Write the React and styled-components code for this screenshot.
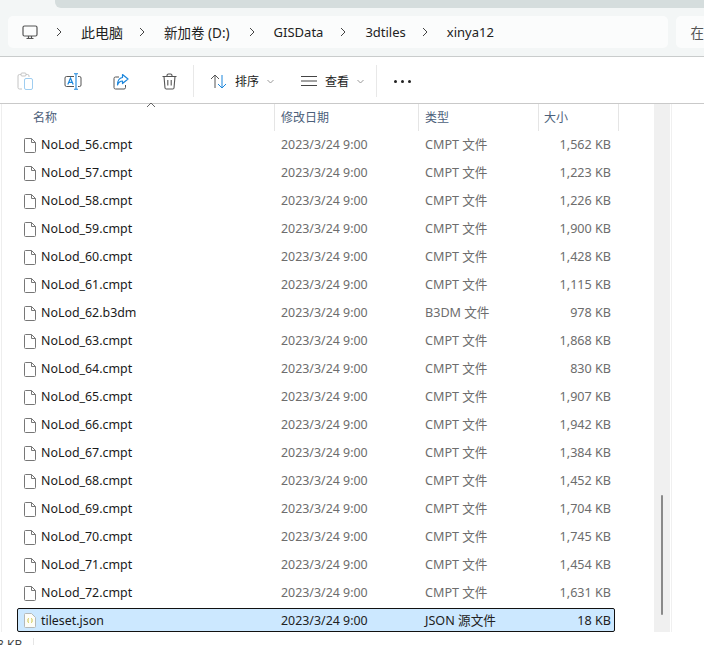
import React from 'react'
import styled, { createGlobalStyle } from 'styled-components'

const GlobalStyle = createGlobalStyle`
  html, body {
    margin: 0;
    padding: 0;
    background: #fff;
    overflow: hidden;
  }
  body {
    font-family: "Noto Sans", "Noto Sans CJK SC", sans-serif;
  }
`

const crumbs = [
  { label: '此电脑', size: 14, gap: 16 },
  { label: '新加卷 (D:)', size: 13.5, gap: 19 },
  { label: 'GISData', size: 13, gap: 17 },
  { label: '3dtiles', size: 13, gap: 16 },
  { label: 'xinya12', size: 13, gap: 16 },
]

const sizes = [
  1562, 1223, 1226, 1900, 1428, 1115, 978, 1868, 830, 1907, 1942, 1384, 1452, 1704, 1745, 1454, 1631,
]

const formatSize = (n) => `${n.toLocaleString('en-US')} KB`

const files = sizes.map((size, i) => {
  const num = 56 + i
  const isB3dm = num === 62
  return {
    name: `NoLod_${num}.${isB3dm ? 'b3dm' : 'cmpt'}`,
    type: isB3dm ? 'B3DM 文件' : 'CMPT 文件',
    size: formatSize(size),
  }
})

function Chevron() {
  return (
    <svg width="6" height="10" viewBox="0 0 6 10" fill="none" stroke="#444" strokeWidth="1">
      <path d="M1 1l4 4-4 4" />
    </svg>
  )
}

function Monitor() {
  return (
    <svg width="16" height="15" viewBox="0 0 16 15" fill="none" stroke="#555" strokeWidth="1.2">
      <rect x="1" y="1" width="14" height="10" rx="1.5" />
      <path d="M4.500 13.500h7M6.500 11v2.500M9.500 11v2.500" />
    </svg>
  )
}

function Caret() {
  return (
    <svg width="7" height="5" viewBox="0 0 7 5" fill="none" stroke="#999" strokeWidth="1">
      <path d="M.5 1l3 3 3-3" />
    </svg>
  )
}

function PasteIcon() {
  return (
    <svg width="16" height="18" viewBox="0 0 16 18" fill="none">
      <path d="M5 17H2.500A1.500 1.500 0 0 1 1 15.500V4a1.500 1.500 0 0 1 1.500-1.500h8A1.500 1.500 0 0 1 12 4v1" stroke="#c4c4c4" />
      <rect x="4" y="1" width="5" height="3" rx="1" stroke="#c4c4c4" fill="#fff" />
      <rect x="7.500" y="6.500" width="8" height="11" rx="1.500" stroke="#9fcdf0" fill="#fff" />
    </svg>
  )
}

function RenameIcon() {
  return (
    <svg width="18" height="17" viewBox="0 0 18 17" fill="none">
      <path d="M10 3.500H2.500A1.500 1.500 0 0 0 1 5v7a1.500 1.500 0 0 0 1.500 1.500H10M14 3.500h1.500A1.500 1.500 0 0 1 17 5v7a1.500 1.500 0 0 1-1.500 1.500H14" stroke="#555" />
      <path d="M10 .8h4M12 .8v15.400M10 16.200h4" stroke="#1b86dc" strokeWidth="1.1" />
      <path d="M3.800 11.500L6.500 5l2.700 6.500M4.800 9.400h3.400" stroke="#1b86dc" strokeWidth="1.2" />
    </svg>
  )
}

function ShareIcon() {
  return (
    <svg width="16" height="17" viewBox="0 0 16 17" fill="none">
      <path d="M6 4H2.500A1.500 1.500 0 0 0 1 5.500v9A1.500 1.500 0 0 0 2.500 16h8.500a1.500 1.500 0 0 0 1.500-1.500V12" stroke="#555" />
      <path d="M9.500 1.500L15 6l-5.500 4.500V8C7 8 5.500 9.500 4.500 12c0-4 1.500-7 5-7.500z" stroke="#1b86dc" strokeWidth="1.2" strokeLinejoin="round" />
    </svg>
  )
}

function TrashIcon() {
  return (
    <svg width="15" height="17" viewBox="0 0 15 17" fill="none" stroke="#555" strokeWidth="1.1">
      <path d="M.5 3.500h14M5 3.500V2.500A1.500 1.500 0 0 1 6.500 1h2A1.500 1.500 0 0 1 10 2.500v1" />
      <path d="M2 3.500l1 11.500a1.200 1.200 0 0 0 1.200 1h6.600a1.200 1.200 0 0 0 1.200-1l1-11.500" />
      <path d="M5.800 7v5.500M9.200 7v5.500" />
    </svg>
  )
}

function SortIcon() {
  return (
    <svg width="17" height="15" viewBox="0 0 17 15" fill="none">
      <path d="M5 14V1M1 5l4-4 4 4" stroke="#555" />
      <path d="M12 1v13M8 10l4 4 4-4" stroke="#1b86dc" />
    </svg>
  )
}

function ViewIcon() {
  return (
    <svg width="16" height="10" viewBox="0 0 16 10" fill="none" stroke="#444" strokeWidth="1">
      <path d="M0 .5h16M0 5h16M0 9.500h16" />
    </svg>
  )
}

function FileIcon() {
  return (
    <svg width="12" height="15" viewBox="0 0 12 15" fill="#fff" stroke="#777" strokeWidth="1">
      <path d="M1.500.5h6l4 4v9a1 1 0 0 1-1 1h-9a1 1 0 0 1-1-1v-12a1 1 0 0 1 1-1z" />
      <path d="M7.500.5v4h4" fill="none" />
    </svg>
  )
}

function JsonIcon() {
  return (
    <svg width="12" height="15" viewBox="0 0 12 15" fill="#fdfdf8" stroke="#b5b9b9" strokeWidth="1">
      <path d="M1.500.5h6l4 4v9a1 1 0 0 1-1 1h-9a1 1 0 0 1-1-1v-12a1 1 0 0 1 1-1z" />
      <path d="M4.800 5.500c-1 0-.8 1-.8 2s-.2 2 .8 2M7.200 5.500c1 0 .8 1 .8 2s.2 2-.8 2" fill="none" stroke="#c9c030" />
    </svg>
  )
}

function App() {
  return (
    <Page>
      <GlobalStyle />
      <TopBand>
        <TitleStrip />
        <AddressRow>
          <AddressBar>
            <MonitorSlot>
              <Monitor />
            </MonitorSlot>
            {crumbs.map((c) => (
              <Crumb key={c.label} $gap={c.gap}>
                <Chevron />
                <CrumbText $size={c.size}>{c.label}</CrumbText>
              </Crumb>
            ))}
          </AddressBar>
          <SearchBox>在</SearchBox>
        </AddressRow>
      </TopBand>

      <Toolbar>
        <IconButton><PasteIcon /></IconButton>
        <IconButton><RenameIcon /></IconButton>
        <IconButton><ShareIcon /></IconButton>
        <IconButton><TrashIcon /></IconButton>
        <ToolDivider />
        <MenuButton>
          <SortIcon />
          <MenuLabel>排序</MenuLabel>
          <Caret />
        </MenuButton>
        <MenuButton>
          <ViewIcon />
          <MenuLabel>查看</MenuLabel>
          <Caret />
        </MenuButton>
        <ToolDivider />
        <Dots>
          <Dot />
          <Dot />
          <Dot />
        </Dots>
      </Toolbar>

      <Body>
        <ListPane>
          <Header>
            <SortArrow>
              <svg width="10" height="6" viewBox="0 0 10 6" fill="none" stroke="#666" strokeWidth="1">
                <path d="M1 5l4-4 4 4" />
              </svg>
            </SortArrow>
            <HeaderCell $width={273} $pad={31}>名称</HeaderCell>
            <HeaderCell $width={144} $pad={6}>修改日期</HeaderCell>
            <HeaderCell $width={120} $pad={6}>类型</HeaderCell>
            <HeaderCell $width={80} $pad={5}>大小</HeaderCell>
          </Header>
          {files.map((f) => (
            <Row key={f.name}>
              <NameCell>
                <FileIcon />
                <FileName>{f.name}</FileName>
              </NameCell>
              <DateCell>2023/3/24 9:00</DateCell>
              <TypeCell>{f.type}</TypeCell>
              <SizeCell>{f.size}</SizeCell>
            </Row>
          ))}
          <SelectedRow>
            <NameCell $selected>
              <JsonIcon />
              <FileName>tileset.json</FileName>
            </NameCell>
            <DateCell $selected>2023/3/24 9:00</DateCell>
            <TypeCell $selected>JSON 源文件</TypeCell>
            <SizeCell $selected>18 KB</SizeCell>
          </SelectedRow>
        </ListPane>
        <ScrollTrack>
          <ScrollThumb />
        </ScrollTrack>
      </Body>

      <Footer>
        <FooterText>8 KB</FooterText>
        <FooterLine />
      </Footer>
    </Page>
  )
}

const Page = styled.div`
  width: 704px;
  height: 645px;
  display: flex;
  flex-direction: column;
  overflow: hidden;
  font-size: 12.4px;
  color: #1a1a1a;
  background: #fff;
`

const TopBand = styled.div`
  height: 56px;
  background: #f3f6f6;
  border-bottom: 1px solid #c9cccc;
`

const TitleStrip = styled.div`
  height: 8px;
  margin-left: 55px;
  background: #d5dddd;
  border-bottom-left-radius: 6px;
`

const AddressRow = styled.div`
  display: flex;
  gap: 8px;
  height: 32px;
  margin: 8px 0 0 8px;
`

const AddressBar = styled.div`
  width: 655px;
  display: flex;
  align-items: center;
  background: #fbfcfc;
  border-radius: 5px;
  padding-left: 14px;
`

const MonitorSlot = styled.div`
  display: flex;
  width: 34px;
`

const Crumb = styled.div`
  display: flex;
  align-items: center;
  gap: 19px;
  margin-right: ${(p) => p.$gap}px;
`

const CrumbText = styled.span`
  font-size: ${(p) => p.$size}px;
  color: #222;
`

const SearchBox = styled.div`
  flex: 1;
  display: flex;
  align-items: center;
  padding-left: 15px;
  background: #fbfcfc;
  border-radius: 5px 0 0 5px;
  font-size: 13.500px;
  color: #555;
`

const Toolbar = styled.div`
  height: 44px;
  padding: 2px 0 0 1px;
  display: flex;
  align-items: center;
  border-bottom: 1px solid #c9c9c9;
`

const IconButton = styled.div`
  width: 48px;
  display: flex;
  justify-content: center;
`

const ToolDivider = styled.div`
  width: 1px;
  height: 32px;
  background: #e8e8e8;
`

const MenuButton = styled.div`
  width: 91px;
  display: flex;
  align-items: center;
  padding-left: 16px;
  box-sizing: border-box;
  gap: 8px;
`

const MenuLabel = styled.span`
  font-size: 12px;
  color: #222;
`

const Dots = styled.div`
  display: flex;
  gap: 4px;
  margin-left: 17px;
`

const Dot = styled.div`
  width: 3px;
  height: 3px;
  border-radius: 50%;
  background: #222;
`

const Body = styled.div`
  display: flex;
  align-items: flex-start;
  height: 529px;
`

const ListPane = styled.div`
  width: 653px;
  height: 528px;
  box-sizing: border-box;
  border-left: 1px solid #eee;
  margin-left: 1px;
`

const Header = styled.div`
  position: relative;
  display: flex;
  height: 27px;
`

const SortArrow = styled.div`
  position: absolute;
  left: 144px;
  top: -2px;
  display: flex;
`

const HeaderCell = styled.div`
  box-sizing: border-box;
  width: ${(p) => p.$width}px;
  padding-left: ${(p) => p.$pad}px;
  padding-bottom: 2px;
  display: flex;
  align-items: center;
  border-right: 1px solid #e5e5e5;
  color: #4c607a;
  font-size: 12px;
`

const Row = styled.div`
  display: flex;
  align-items: center;
  height: 28px;
  line-height: 26px;
`

const SelectedRow = styled(Row)`
  height: 24px;
  width: 598px;
  margin: 1px 0 0 15px;
  padding-top: 1px;
  line-height: 22px;
  box-sizing: border-box;
  background: #cce8ff;
  border: 1px solid #111;
  border-radius: 2px;
`

const NameCell = styled.div`
  box-sizing: border-box;
  width: ${(p) => (p.$selected ? 257 : 273)}px;
  padding-left: ${(p) => (p.$selected ? 6 : 22)}px;
  display: flex;
  align-items: center;
  gap: 5px;
`

const FileName = styled.span`
  font-size: 12.400px;
  color: #1a1a1a;
`

const DateCell = styled.div`
  width: 144px;
  box-sizing: border-box;
  padding-left: 6px;
  color: ${(p) => (p.$selected ? '#222' : '#6d6d6d')};
`

const TypeCell = styled(DateCell)`
  width: 120px;
  font-size: 12.600px;
`

const SizeCell = styled.div`
  width: 72px;
  text-align: right;
  font-size: 12.600px;
  color: ${(p) => (p.$selected ? '#222' : '#6d6d6d')};
`

const ScrollTrack = styled.div`
  width: 16px;
  height: 528px;
  background: #f0f0f0;
  box-shadow: 1px 0 0 #fff, 2px 0 0 #f0f0f0;
`

const ScrollThumb = styled.div`
  width: 2px;
  height: 120px;
  margin: 391px 0 0 7px;
  background: #8a8a8a;
  border-radius: 1px;
`

const Footer = styled.div`
  display: flex;
  align-items: flex-start;
  height: 12px;
`

const FooterText = styled.span`
  width: 36px;
  margin-left: -3px;
  margin-top: 4px;
  font-size: 12px;
  line-height: 16px;
  color: #444;
`

const FooterLine = styled.div`
  width: 1px;
  height: 10px;
  margin-top: 5px;
  background: #e5e5e5;
`

export default App
